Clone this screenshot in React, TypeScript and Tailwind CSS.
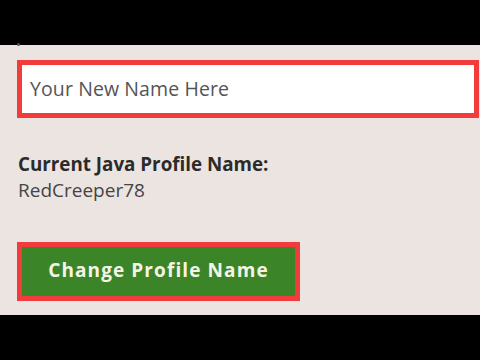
export default function App() {
  return (
    <div className="w-[480px] h-[360px] flex flex-col bg-black" style={{ fontFamily: '"Open Sans", "Noto Sans", sans-serif' }}>
      <div className="h-[45px] bg-black shrink-0" />
      <div className="h-[270px] shrink-0 bg-[#ece4e1] pl-[17px] relative">
        <div className="absolute left-[17px] top-[-2px] w-[3px] h-[3px] rounded-full bg-[#555]" />
        <div className="mt-[15px] w-[462px] h-[58px] border-[5px] border-[#f23c3c] bg-white flex items-center pl-[8px]">
          <span className="text-[19.5px] text-[#555] leading-none tracking-[0.1px]">Your New Name Here</span>
        </div>
        <div className="mt-[34px] text-[18.8px] font-bold text-[#2b2b2b] leading-[25px] pl-[1px]">Current Java Profile Name:</div>
        <div className="mt-[1px] text-[19px] text-[#444] leading-[25px] pl-[1px]">RedCreeper78</div>
        <div className="mt-[39px] w-[283px] h-[59px] border-[5px] border-[#f23c3c] bg-[#3b8528] flex items-center justify-center">
          <span className="text-[19px] font-bold text-[#f4f4e6] tracking-[1.1px] leading-none pb-[3px]">Change Profile Name</span>
        </div>
      </div>
      <div className="h-[45px] bg-black shrink-0" />
    </div>
  );
}
